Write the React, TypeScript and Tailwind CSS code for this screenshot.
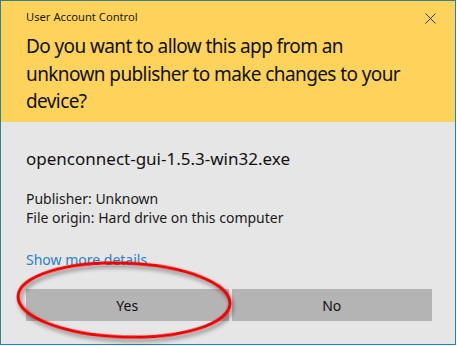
import React from 'react';

const font = { fontFamily: '"Segoe UI", "Noto Sans", "Open Sans", sans-serif' };

const App: React.FC = () => {
  return (
    <div className="w-[457px] h-[346px] bg-white">
      <div
        className="relative w-[456px] h-[345px] border border-[#1a82d4] border-t-[#3a7f86] border-l-[#3a7f86] bg-[#e6e6e6] flex flex-col"
        style={font}
      >
        {/* Header */}
        <div className="bg-[#fdd35c] h-[121px] pl-[25px] pr-[14px] pt-[7px]">
          <div className="flex items-center justify-between">
            <span className="text-[11.2px] leading-[18px] text-[#1a1a1a]">User Account Control</span>
            <svg width="11" height="11" viewBox="0 0 11 11" className="mr-[5px] mt-[2px]">
              <path d="M0.5 0.5 L10.5 10.5 M10.5 0.5 L0.5 10.5" stroke="#333" strokeWidth="1" />
            </svg>
          </div>
          <p className="mt-[7px] text-[19px] leading-[27.5px] tracking-[-0.6px] text-[#111] whitespace-nowrap">
            Do you want to allow this app from an
            <br />
            unknown publisher to make changes to your
            <br />
            device?
          </p>
        </div>

        {/* Body */}
        <div className="flex-1 pl-[25px] pr-[23px] pt-[26px]">
          <div className="text-[17px] leading-[22px] text-[#111]">openconnect-gui-1.5.3-win32.exe</div>
          <div className="mt-[19px] text-[14px] leading-[19px] text-[#1a1a1a]">
            <div>Publisher: Unknown</div>
            <div>File origin: Hard drive on this computer</div>
          </div>
          <div className="mt-[23px] text-[14px] leading-[20px] text-[#2b7fc4]">Show more details</div>
          <div className="mt-[19px] flex gap-[3px]">
            <button className="w-[203px] h-[32px] bg-[#b4b4b4] text-[14px] text-[#111]">Yes</button>
            <button className="w-[201px] h-[32px] bg-[#b4b4b4] text-[14px] text-[#111]">No</button>
          </div>
        </div>

        {/* Red annotation ellipse */}
        <svg
          className="absolute left-0 top-0 pointer-events-none"
          width="456"
          height="345"
          viewBox="0 0 456 345"
        >
          <defs>
            <filter id="sh" x="-20%" y="-40%" width="140%" height="180%">
              <feDropShadow dx="2" dy="3" stdDeviation="2" floodColor="#000" floodOpacity="0.45" />
            </filter>
          </defs>
          <ellipse
            cx="123"
            cy="299"
            rx="106"
            ry="37"
            transform="rotate(2 123 299)"
            fill="none"
            stroke="#ee0000"
            strokeWidth="3"
            filter="url(#sh)"
          />
        </svg>
      </div>
    </div>
  );
};

export default App;
